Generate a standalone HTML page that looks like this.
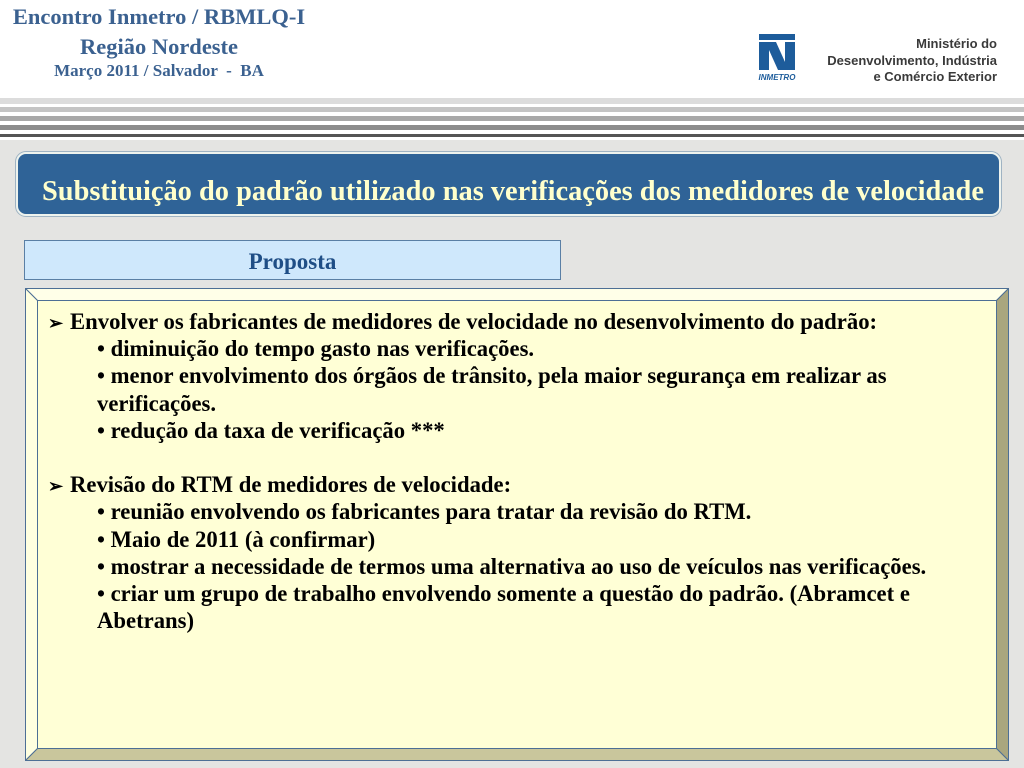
<!DOCTYPE html>
<html><head><meta charset="utf-8"><style>
*{margin:0;padding:0;box-sizing:border-box}
body{width:1024px;height:768px;overflow:hidden;background:#e4e4e2;position:relative;font-family:"Liberation Serif",serif}
.hdr{position:absolute;left:0;top:0;width:1024px;height:98px;background:#fff}
.s{position:absolute;left:0;width:1024px}
.ht{position:absolute;left:0;width:318px;text-align:center;color:#3b6190;font-weight:bold;white-space:nowrap}
.title{position:absolute;left:16px;top:152px;width:985px;height:64px;background:#2f6397;border:2px solid #eef3ee;border-radius:10px;box-shadow:0 0 0 1px #9fb3c3}
.title span{position:absolute;left:24px;top:22px;color:#ffffcc;font-size:28.4px;font-weight:bold;white-space:nowrap;line-height:32px}
.prop{position:absolute;left:24px;top:240px;width:537px;height:40px;background:#cfe8fc;border:1px solid #5a7fa5;text-align:center;color:#1f4e86;font-weight:bold;font-size:23px;line-height:42px}
.box{position:absolute;left:25px;top:288px;width:984px;height:473px}
.txt{position:absolute;left:48px;top:308px;font-size:22.7px;font-weight:bold;line-height:27.2px;color:#000;white-space:nowrap}
.txt>div{height:27.2px;overflow:visible}
.i{padding-left:49px}
.a{display:inline-block;width:22px;font-size:18px;line-height:0}
</style></head><body>
<div class="hdr"></div>
<div class="ht" style="top:4px;font-size:22.5px">Encontro Inmetro / RBMLQ-I</div>
<div class="ht" style="top:34px;font-size:22.5px">Região Nordeste</div>
<div class="ht" style="top:61px;font-size:17px">Março 2011 / Salvador &nbsp;- &nbsp;BA</div>
<svg style="position:absolute;left:756px;top:32px" width="44" height="52" viewBox="0 0 44 52">
<rect x="3" y="2" width="36" height="6" fill="#1d5c9b"/>
<rect x="3" y="10" width="10" height="28" fill="#1d5c9b"/>
<rect x="29" y="10" width="10" height="28" fill="#1d5c9b"/>
<polygon points="13,10 20,10 29,30 29,38 22,38 13,18" fill="#1d5c9b"/>
<text x="21" y="48" font-family="Liberation Sans" font-size="8" font-style="italic" font-weight="bold" fill="#1d5c9b" text-anchor="middle">INMETRO</text>
</svg>
<div style="position:absolute;left:780px;top:36px;width:217px;text-align:right;font-family:'Liberation Sans',sans-serif;font-weight:bold;font-size:13px;line-height:16.5px;color:#3a3a3a">Ministério do<br>Desenvolvimento, Indústria<br>e Comércio Exterior</div>
<div class="s" style="top:98px;height:6px;background:#dcdcdc"></div>
<div class="s" style="top:104px;height:3px;background:#fff"></div>
<div class="s" style="top:107px;height:5px;background:#c4c4c4"></div>
<div class="s" style="top:112px;height:4px;background:#fff"></div>
<div class="s" style="top:116px;height:5px;background:#a8a8a8"></div>
<div class="s" style="top:121px;height:4px;background:#fff"></div>
<div class="s" style="top:125px;height:5px;background:#8c8c8c"></div>
<div class="s" style="top:130px;height:4px;background:#fff"></div>
<div class="s" style="top:134px;height:3px;background:#555"></div>
<div class="s" style="top:137px;height:3px;background:#fff"></div>
<div class="title"><span>Substituição do padrão utilizado nas verificações dos medidores de velocidade</span></div>
<div class="prop">Proposta</div>
<svg class="box" width="984" height="473" viewBox="0 0 984 473">
<rect x="0.5" y="0.5" width="983" height="472" fill="#ffffdc" stroke="#4d6f95"/>
<polygon points="0.5,0.5 983.5,0.5 971.5,12.5 12.5,12.5" fill="#ffffe8" stroke="#4d6f95"/>
<polygon points="0.5,0.5 12.5,12.5 12.5,460.5 0.5,472.5" fill="#ffffe0" stroke="#4d6f95"/>
<polygon points="983.5,0.5 983.5,472.5 971.5,460.5 971.5,12.5" fill="#a9a67e" stroke="#4d6f95"/>
<polygon points="0.5,472.5 983.5,472.5 971.5,460.5 12.5,460.5" fill="#c9c69c" stroke="#4d6f95"/>
<rect x="12.5" y="12.5" width="959" height="448" fill="#ffffd6" stroke="#4d6f95"/>
</svg>
<div class="txt">
<div><span class="a">➢</span>Envolver os fabricantes de medidores de velocidade no desenvolvimento do padrão:</div>
<div class="i">• diminuição do tempo gasto nas verificações.</div>
<div class="i">• menor envolvimento dos órgãos de trânsito, pela maior segurança em realizar as</div>
<div class="i">verificações.</div>
<div class="i">• redução da taxa de verificação ***</div>
<div>&nbsp;</div>
<div><span class="a">➢</span>Revisão do RTM de medidores de velocidade:</div>
<div class="i">• reunião envolvendo os fabricantes para tratar da revisão do RTM.</div>
<div class="i">• Maio de 2011 (à confirmar)</div>
<div class="i">• mostrar a necessidade de termos uma alternativa ao uso de veículos nas verificações.</div>
<div class="i">• criar um grupo de trabalho envolvendo somente a questão do padrão. (Abramcet e</div>
<div class="i">Abetrans)</div>
</div>
</body></html>
